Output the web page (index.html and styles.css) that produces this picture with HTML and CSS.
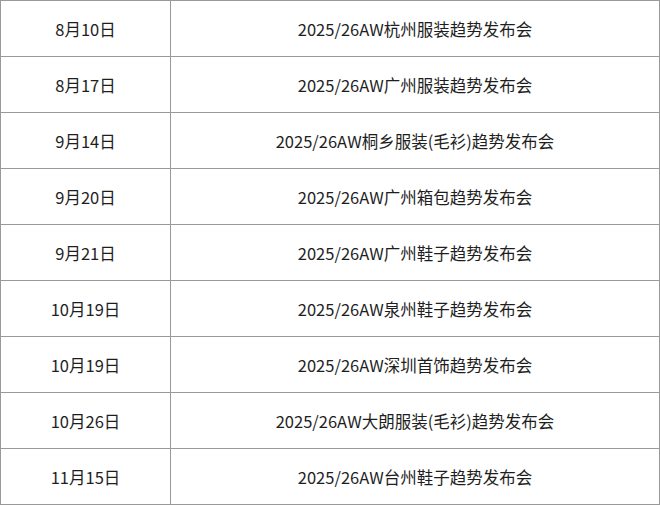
FILE: index.html
```html
<!DOCTYPE html>
<html lang="zh">
<head>
<meta charset="utf-8">
<link rel="stylesheet" href="styles.css">
</head>
<body>
<table class="schedule">
  <colgroup><col class="c-date"><col class="c-event"></colgroup>
  <tbody>
    <tr><td class="date">8月10日</td><td>2025/26AW杭州服装趋势发布会</td></tr>
    <tr><td class="date">8月17日</td><td>2025/26AW广州服装趋势发布会</td></tr>
    <tr><td class="date">9月14日</td><td>2025/26AW桐乡服装(毛衫)趋势发布会</td></tr>
    <tr><td class="date">9月20日</td><td>2025/26AW广州箱包趋势发布会</td></tr>
    <tr><td class="date">9月21日</td><td>2025/26AW广州鞋子趋势发布会</td></tr>
    <tr><td class="date">10月19日</td><td>2025/26AW泉州鞋子趋势发布会</td></tr>
    <tr><td class="date">10月19日</td><td>2025/26AW深圳首饰趋势发布会</td></tr>
    <tr><td class="date">10月26日</td><td>2025/26AW大朗服装(毛衫)趋势发布会</td></tr>
    <tr><td class="date">11月15日</td><td>2025/26AW台州鞋子趋势发布会</td></tr>
  </tbody>
</table>
</body>
</html>
```
FILE: styles.css
```css
html, body {
  margin: 0;
  padding: 0;
  background: #fff;
}
.schedule {
  width: 660px;
  border-collapse: collapse;
  table-layout: fixed;
  font-family: "Noto Sans CJK SC", "Noto Sans", sans-serif;
  font-size: 16.5px;
  color: #1e1e1e;
}
.c-date { width: 170px; }
.schedule td {
  border: 1px solid #999;
  height: 55px;
  padding: 0;
  text-align: center;
  vertical-align: middle;
  line-height: 20px;
}
```
